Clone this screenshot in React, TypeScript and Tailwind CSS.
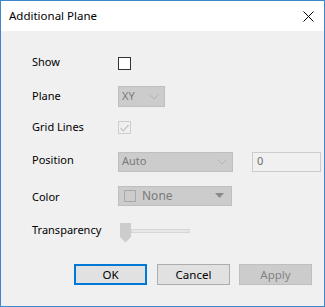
import React from "react";

const font = { fontFamily: '"Noto Sans", "Liberation Sans", sans-serif' };

function Chevron() {
  return (
    <svg width="10" height="6" viewBox="0 0 10 6" className="shrink-0">
      <path d="M0.5 0.5 L5 5 L9.5 0.5" fill="none" stroke="#b4b4b4" strokeWidth="1" />
    </svg>
  );
}

function Label({ children, className = "" }: { children: React.ReactNode; className?: string }) {
  return <div className={"w-[86px] shrink-0 text-[11px] text-black " + className}>{children}</div>;
}

export default function App() {
  return (
    <div
      className="w-[325px] h-[307px] border border-[#3c88cf] bg-[#f0f0f0] flex flex-col overflow-hidden"
      style={font}
    >
      {/* title bar */}
      <div className="h-[30px] bg-white flex items-center justify-between pl-[8px] pr-[10px] shrink-0">
        <span className="text-[11.5px] text-black">Additional Plane</span>
        <svg width="11" height="11" viewBox="0 0 11 11">
          <path d="M0.5 0.5 L10.5 10.5 M10.5 0.5 L0.5 10.5" stroke="#000" strokeWidth="1" />
        </svg>
      </div>

      <div className="flex flex-col pl-[31px]">
        {/* Show */}
        <div className="h-[21px] mt-[22px] flex items-center">
          <Label className="-mt-[2px]">Show</Label>
          <div className="w-[13px] h-[13px] border border-[#333] bg-white" />
        </div>

        {/* Plane */}
        <div className="h-[21px] mt-[12px] flex items-center">
          <Label>Plane</Label>
          <div className="w-[47px] h-[21px] bg-[#cccccc] border border-[#bfbfbf] flex items-center justify-between pl-[3px] pr-[5px]">
            <span className="text-[11px] text-[#7a7a7a]">XY</span>
            <Chevron />
          </div>
        </div>

        {/* Grid Lines */}
        <div className="h-[21px] mt-[10px] flex items-center">
          <Label>Grid Lines</Label>
          <div className="w-[13px] h-[13px] border border-[#cccccc] bg-[#f0f0f0] flex items-center justify-center">
            <svg width="9" height="8" viewBox="0 0 9 8">
              <path d="M0.5 4 L3.3 6.8 L8.5 1" fill="none" stroke="#c4c4c4" strokeWidth="1.2" />
            </svg>
          </div>
        </div>

        {/* Position */}
        <div className="h-[21px] mt-[13px] flex items-center">
          <Label className="-mt-[2px]">Position</Label>
          <div className="w-[115px] h-[20px] bg-[#cccccc] border border-[#bfbfbf] flex items-center justify-between pl-[3px] pr-[5px]">
            <span className="text-[11px] text-[#7a7a7a]">Auto</span>
            <Chevron />
          </div>
          <div className="w-[69px] h-[20px] ml-[19px] border border-[#cccccc] bg-[#f0f0f0] flex items-center pl-[4px]">
            <span className="text-[11px] text-[#6d6d6d]">0</span>
          </div>
        </div>

        {/* Color */}
        <div className="h-[21px] mt-[13px] flex items-center">
          <Label className="mt-[3px]">Color</Label>
          <div className="w-[114px] h-[20px] bg-[#cccccc] border border-[#bfbfbf] flex items-center pl-[5px] pr-[7px]">
            <div className="w-[12px] h-[12px] border border-[#a8a8a8]" />
            <span className="ml-[6px] text-[12px] text-[#7a7a7a] flex-1">None</span>
            <svg width="9" height="5" viewBox="0 0 9 5">
              <path d="M0 0 L9 0 L4.5 5 Z" fill="#8a8a8a" />
            </svg>
          </div>
        </div>

        {/* Transparency */}
        <div className="h-[21px] mt-[16px] flex items-center">
          <Label className="-mt-[5px]">Transparency</Label>
          <div className="flex items-start ml-[2px] h-[20px]">
            <svg width="11" height="20" viewBox="0 0 11 20" className="shrink-0">
              <path d="M0 0 H11 V14 L5.5 19.5 L0 14 Z" fill="#cccccc" />
            </svg>
            <div className="w-[59px] h-[4px] mt-[6px] bg-[#e7e7e7] border border-[#d6d6d6]" />
          </div>
        </div>
      </div>

      {/* buttons */}
      <div className="flex mt-[21px] pl-[73px] text-[11.5px]">
        <div className="w-[73px] h-[21px] border-2 border-[#0078d7] bg-[#e1e1e1] flex items-center justify-center text-black">
          OK
        </div>
        <div className="w-[73px] h-[21px] ml-[10px] border border-[#adadad] bg-[#e1e1e1] flex items-center justify-center text-black">
          Cancel
        </div>
        <div className="w-[73px] h-[21px] ml-[9px] border border-[#bfbfbf] bg-[#cccccc] flex items-center justify-center text-[#838383]">
          Apply
        </div>
      </div>
    </div>
  );
}
